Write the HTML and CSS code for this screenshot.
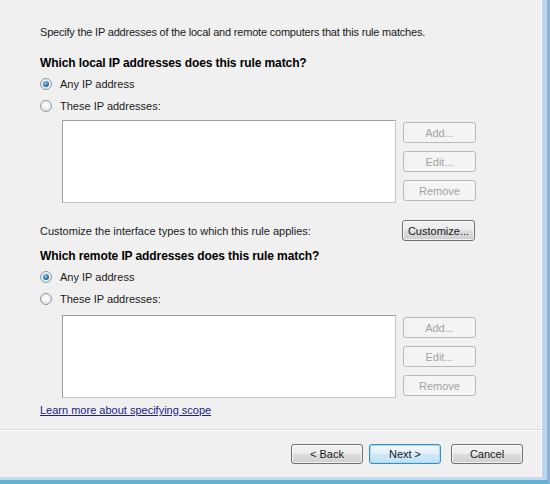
FILE: index.html
```html
<!DOCTYPE html>
<html>
<head>
<meta charset="utf-8">
<link rel="stylesheet" href="styles.css">
</head>
<body>
<div class="window">
  <div class="dialog">
    <div class="content">
      <p class="intro">Specify the IP addresses of the local and remote computers that this rule matches.</p>
      <h2 class="question">Which local IP addresses does this rule match?</h2>
      <label class="radio"><span class="dot checked"></span>Any IP address</label>
      <label class="radio"><span class="dot"></span>These IP addresses:</label>
      <div class="list-row">
        <div class="listbox"></div>
        <div class="side-buttons">
          <button class="btn disabled">Add...</button>
          <button class="btn disabled">Edit...</button>
          <button class="btn disabled">Remove</button>
        </div>
      </div>
      <div class="customize-row">
        <span>Customize the interface types to which this rule applies:</span>
        <button class="btn">Customize...</button>
      </div>
      <h2 class="question q2">Which remote IP addresses does this rule match?</h2>
      <label class="radio"><span class="dot checked"></span>Any IP address</label>
      <label class="radio"><span class="dot"></span>These IP addresses:</label>
      <div class="list-row list2">
        <div class="listbox"></div>
        <div class="side-buttons">
          <button class="btn disabled">Add...</button>
          <button class="btn disabled">Edit...</button>
          <button class="btn disabled">Remove</button>
        </div>
      </div>
      <a class="link" href="#">Learn more about specifying scope</a>
    </div>
    <div class="footer">
      <button class="btn wide">&lt; Back</button>
      <button class="btn wide focus">Next &gt;</button>
      <button class="btn wide cancel">Cancel</button>
    </div>
  </div>
</div>
</body>
</html>
```

FILE: styles.css
```css
html, body {
  margin: 0;
  padding: 0;
}
body {
  background: #f0f0f0;
  font-family: "Liberation Sans", Arial, sans-serif;
  font-size: 11px;
  color: #000;
}
.window {
  width: 550px;
  height: 484px;
  box-sizing: border-box;
  border-right: 3px solid #8fb3d6;
  border-bottom: 4px solid #62b2d2;
  display: flex;
}
.dialog {
  flex: 1;
  display: flex;
  flex-direction: column;
  border-right: 5px solid #bcd4ec;
  border-bottom: 3px solid #c4daef;
  box-shadow: inset -1px 0 0 #fafafa;
}
.content {
  flex: 1;
  padding: 25px 0 0 40px;
  display: flex;
  flex-direction: column;
  align-items: flex-start;
}
.intro {
  margin: 0;
  line-height: 14px;
  letter-spacing: -0.2px;
  color: #1a1a1a;
}
.question {
  margin: 17px 0 0 0;
  font-size: 12px;
  font-weight: bold;
  line-height: 14px;
  letter-spacing: -0.1px;
  color: #000;
}
.question.q2 {
  margin-top: 8px;
}
.radio {
  display: flex;
  align-items: center;
  height: 14px;
  margin-top: 7px;
  color: #1a1a1a;
}
.radio + .radio {
  margin-top: 8px;
}
.dot {
  width: 12px;
  height: 12px;
  box-sizing: border-box;
  border-radius: 50%;
  border: 1px solid #8e9aa4;
  background: radial-gradient(circle at 50% 40%, #ffffff 0%, #e6e6e6 70%, #d4d4d4 100%);
  margin: 0 8px 0 0;
  position: relative;
}
.dot.checked::after {
  content: "";
  position: absolute;
  left: 2px;
  top: 2px;
  width: 6px;
  height: 6px;
  border-radius: 50%;
  background: radial-gradient(circle at 40% 35%, #8fd0f4 0%, #2a7fba 50%, #10456e 100%);
}
.list-row {
  display: flex;
  margin: 7px 0 0 22px;
}
.list-row.list2 {
  margin-top: 9px;
}
.listbox {
  width: 332px;
  height: 81px;
  background: #fff;
  border: 1px solid #a0a0a0;
  border-right-color: #c4c4c4;
  border-bottom-color: #c4c4c4;
}
.side-buttons {
  display: flex;
  flex-direction: column;
  gap: 8px;
  margin: 2px 0 0 7px;
}
.btn {
  width: 73px;
  height: 21px;
  box-sizing: border-box;
  padding: 0;
  font-family: "Liberation Sans", Arial, sans-serif;
  font-size: 11px;
  color: #1a1a1a;
  border: 1px solid #707070;
  border-radius: 3px;
  background: linear-gradient(#f3f3f3 0%, #ebebeb 48%, #dddddd 52%, #cfcfcf 100%);
  box-shadow: inset 0 0 0 1px rgba(255,255,255,0.7);
}
.btn.disabled {
  color: #a3a3a3;
  border-color: #b8b8b8;
  background: #f4f4f4;
  box-shadow: none;
}
.customize-row {
  display: flex;
  align-items: center;
  width: 435px;
  justify-content: space-between;
  margin-top: 17px;
}
.customize-row span {
  color: #1a1a1a;
}
.link {
  margin-top: 5px;
  color: #21218c;
  text-decoration: underline;
  line-height: 14px;
}
.footer {
  height: 48px;
  border-top: 1px solid #dcdcdc;
  box-shadow: inset 0 1px 0 #ffffff;
  display: flex;
  justify-content: flex-end;
  align-items: flex-start;
  padding: 14px 19px 0 0;
  gap: 6px;
  box-sizing: border-box;
}
.btn.wide {
  width: 72px;
  height: 20px;
}
.btn.focus {
  border-color: #3c8dc0;
  background: linear-gradient(#f0f8fd 0%, #e2f1fb 48%, #cfe8f9 52%, #c2e2f6 100%);
  box-shadow: inset 0 0 0 1px #a8dbf7;
}
.btn.cancel {
  margin-left: 4px;
}
```
